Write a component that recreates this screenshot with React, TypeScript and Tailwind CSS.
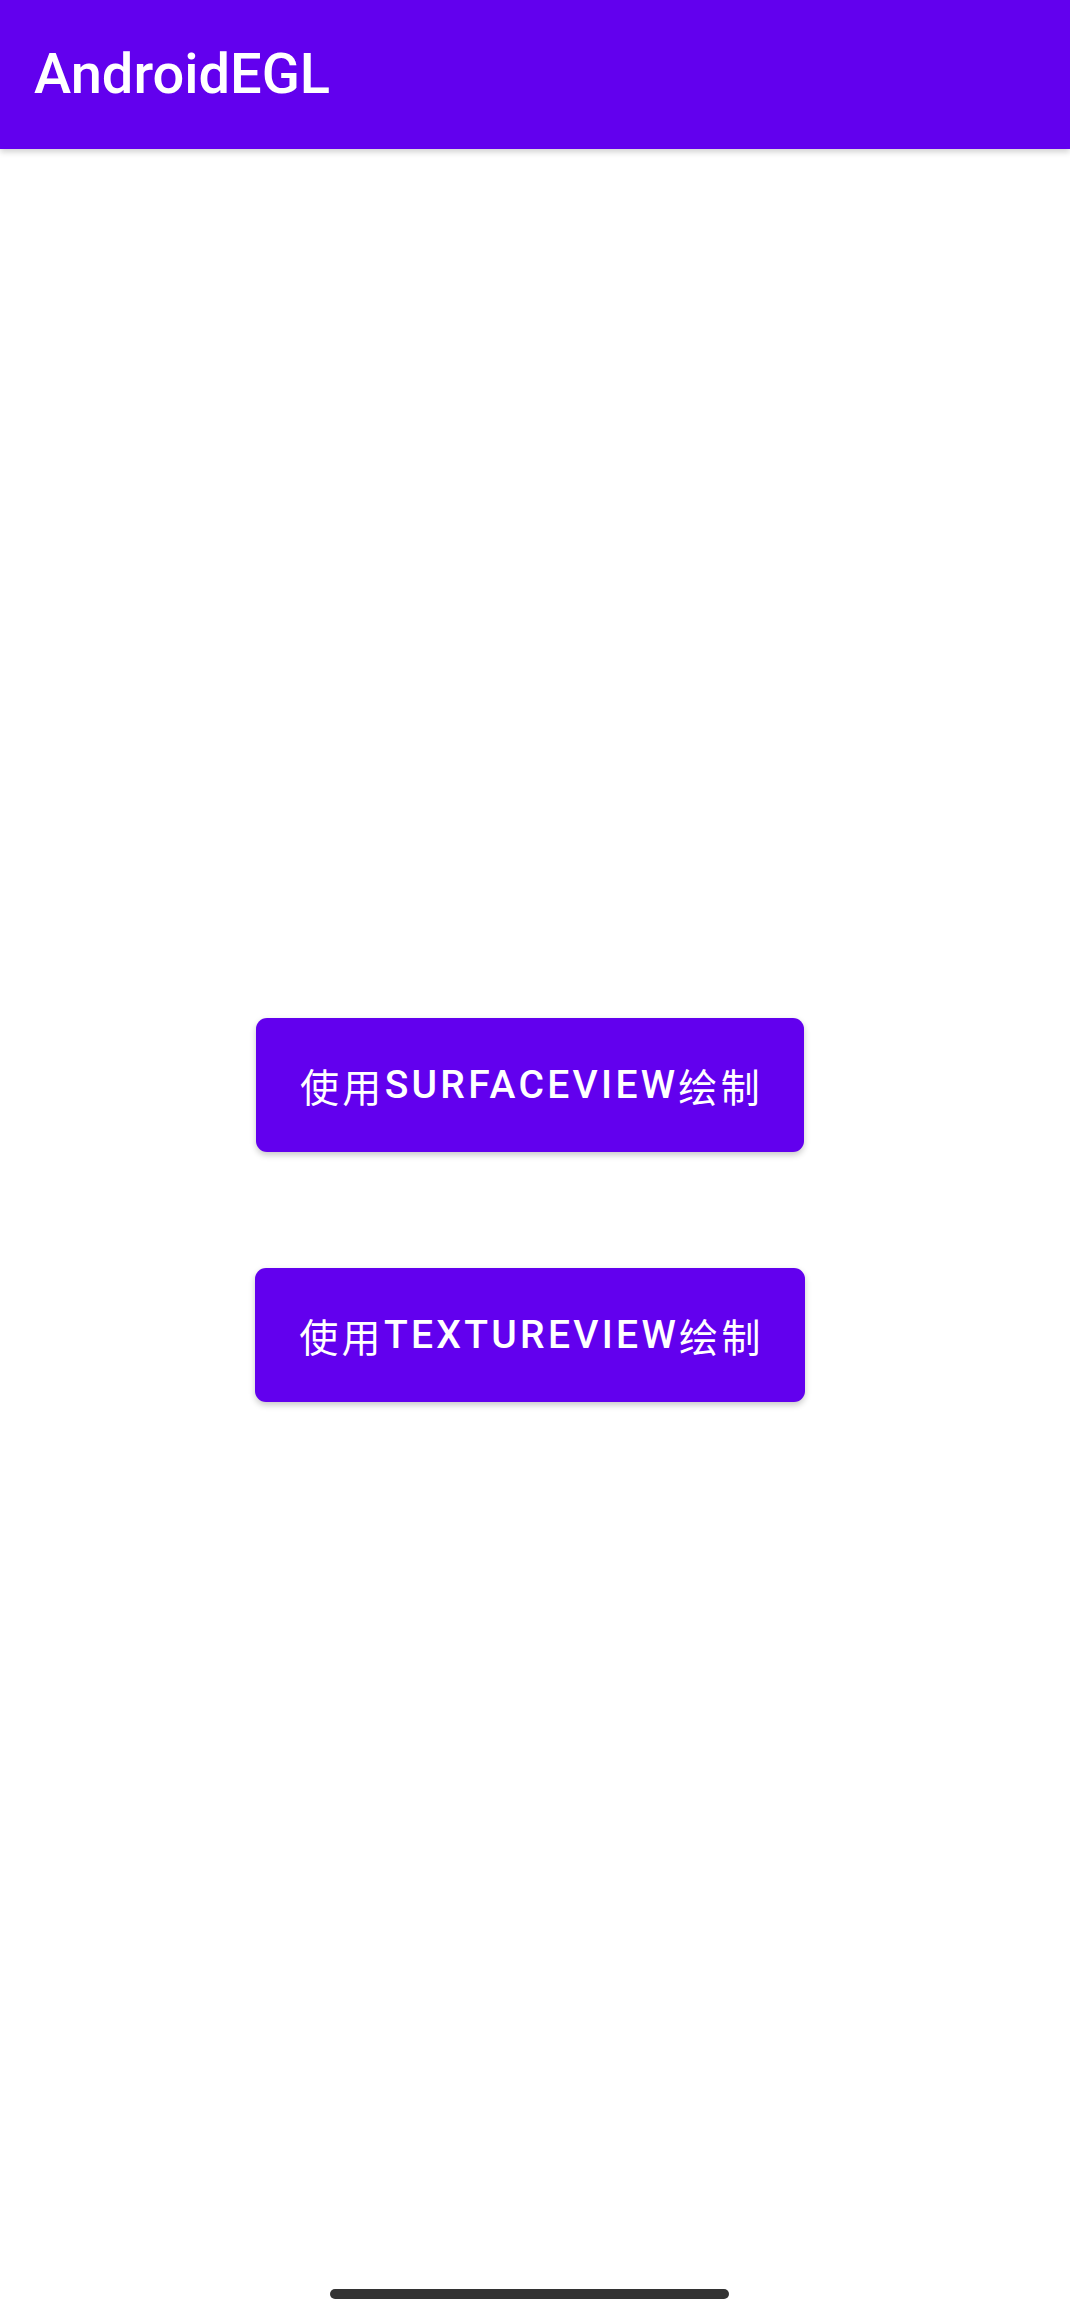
import React from 'react';

const latin = '"Roboto", "Noto Sans CJK SC", sans-serif';
const cjk = '"Noto Sans CJK SC", sans-serif';

function DrawButton({ name }: { name: string }) {
  return (
    <button
      className="h-[134px] pl-[44px] pr-[41px] rounded-[11px] bg-[#6200ee] text-white text-[39px] uppercase tracking-[3.3px] shadow-[0_3px_6px_rgba(0,0,0,0.22)] flex items-center justify-center"
      style={{ fontFamily: latin }}
    >
      <span className="font-normal" style={{ fontFamily: cjk }}>使用</span>
      <span className="font-medium">{name}</span>
      <span className="font-normal" style={{ fontFamily: cjk }}>绘制</span>
    </button>
  );
}

export default function App() {
  return (
    <div className="w-[1070px] h-[2316px] bg-white flex flex-col overflow-hidden">
      <header className="h-[149px] bg-[#6200ee] flex items-center pl-[34px] shadow-[0_3px_6px_rgba(0,0,0,0.18)] relative z-10">
        <h1 className="text-white text-[56px] font-medium leading-none pb-[2px]" style={{ fontFamily: latin }}>
          AndroidEGL
        </h1>
      </header>

      <main className="flex flex-col items-center pt-[869px] pr-[10px] gap-[116px]">
        <DrawButton name="SurfaceView" />
        <DrawButton name="TextureView" />
      </main>

      <div className="mt-auto pb-[17px] pr-[11px] flex justify-center">
        <div className="w-[399px] h-[10px] rounded-full bg-[#333333]" />
      </div>
    </div>
  );
}
